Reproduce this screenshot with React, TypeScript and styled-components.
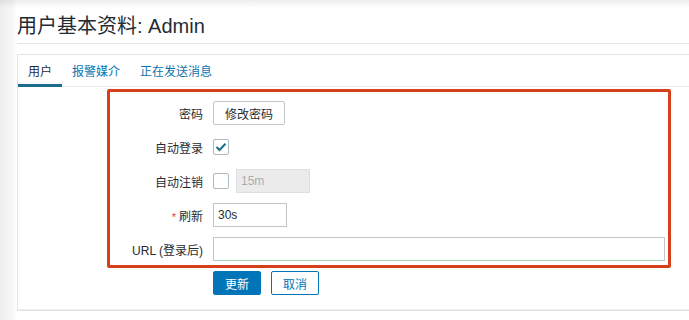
import React from "react";
import styled, { createGlobalStyle } from "styled-components";

const Global = createGlobalStyle`
  html, body { margin: 0; padding: 0; }
  body {
    width: 689px;
    height: 320px;
    overflow: hidden;
    background:
      linear-gradient(to bottom, rgba(0,0,0,0.07), rgba(0,0,0,0) 8px),
      linear-gradient(to right, #efefef 0px, #f6f6f6 12px, #ffffff 17px);
    font-family: "Liberation Sans", Arial, "Noto Sans CJK SC", sans-serif;
    font-size: 12px;
    color: #1f2c33;
  }
`;

const Page = styled.div`
  padding-left: 17px;
  display: flex;
  flex-direction: column;
`;

const Header = styled.div`
  height: 44px;
  display: flex;
  align-items: center;
  border-bottom: 1px solid #e3e6e8;
  padding-top: 6px;
  box-sizing: border-box;
`;

const Title = styled.h1`
  margin: 0;
  font-size: 20px;
  font-weight: normal;
  color: #1f2c33;
  font-family: "Liberation Sans", Arial, "Noto Sans CJK SC", sans-serif;
`;

const TabPanel = styled.div`
  position: relative;
  margin-top: 10px;
  border: 1px solid #dfe4e7;
  border-right: none;
  box-shadow: inset 0 -6px 0 -5px #f0f0f0;
`;

const TabBar = styled.div`
  display: flex;
  height: 31px;
  border-bottom: 1px solid #ebeef0;
`;

const Tab = styled.div<{ $active?: boolean }>`
  padding: 0 10px;
  display: flex;
  align-items: center;
  padding-top: 1px;
  box-sizing: border-box;
  color: ${(p) => (p.$active ? "#1f2c33" : "#0a74b0")};
  border-bottom: 3px solid ${(p) => (p.$active ? "#1b6b90" : "transparent")};
  margin-bottom: -1px;
`;

const Form = styled.div`
  display: flex;
  flex-direction: column;
  gap: 10px;
  padding: 14px 0 15px 0;
`;

const Row = styled.div`
  display: flex;
  align-items: center;
  height: 24px;
  gap: 10px;
`;

const Label = styled.div`
  width: 185px;
  text-align: right;
  color: #1f2c33;
`;

const Star = styled.span`
  color: #e33734;
  margin-right: 3px;
  font-size: 11px;
`;

const Field = styled.div<{ $gap?: number }>`
  display: flex;
  align-items: center;
  gap: ${(p) => p.$gap ?? 7}px;
`;

const Button = styled.button<{ $variant?: "primary" | "outline" | "plain" }>`
  height: 24px;
  padding: 0 11px;
  font-family: inherit;
  font-size: 12px;
  border-radius: 2px;
  box-sizing: border-box;
  cursor: pointer;
  border: 1px solid
    ${(p) => (p.$variant === "plain" ? "#c2c7ca" : "#0275b8")};
  background: ${(p) => (p.$variant === "primary" ? "#0275b8" : "#ffffff")};
  color: ${(p) =>
    p.$variant === "primary" ? "#ffffff" : p.$variant === "outline" ? "#0275b8" : "#1f2c33"};
`;

const Check = styled.div`
  width: 16px;
  height: 16px;
  box-sizing: border-box;
  border: 1px solid #acbbc2;
  border-radius: 2px;
  background: #fff;
  display: flex;
  align-items: center;
  justify-content: center;
`;

const Input = styled.input<{ $w: number }>`
  width: ${(p) => p.$w}px;
  height: 24px;
  box-sizing: border-box;
  border: 1px solid #c0c4c6;
  border-bottom-color: ${(p) => (p.$w > 200 ? "#a9d4b6" : "#c0c4c6")};
  padding: 0 4px;
  font-family: inherit;
  font-size: 12px;
  color: #1f2c33;
  background: #fff;
  outline: none;
  &:disabled {
    background: #ebebeb;
    border-color: #e0e0e0;
    color: #a9adb0;
  }
`;

const Highlight = styled.div`
  position: absolute;
  left: 89px;
  top: 34px;
  width: 564px;
  height: 179px;
  box-sizing: border-box;
  border: 3px solid #d6401d;
  border-radius: 2px;
  pointer-events: none;
`;

export default function App() {
  return (
    <>
      <Global />
      <Page>
        <Header>
          <Title>用户基本资料: Admin</Title>
        </Header>
        <TabPanel>
          <TabBar>
            <Tab $active>用户</Tab>
            <Tab>报警媒介</Tab>
            <Tab>正在发送消息</Tab>
          </TabBar>
          <Form>
            <Row>
              <Label>密码</Label>
              <Button $variant="plain">修改密码</Button>
            </Row>
            <Row>
              <Label>自动登录</Label>
              <Check>
                <svg width="12" height="10" viewBox="0 0 12 10">
                  <path d="M1.5 5 L4.5 8 L10.5 1.8" fill="none" stroke="#1b6b90" strokeWidth="2" />
                </svg>
              </Check>
            </Row>
            <Row>
              <Label>自动注销</Label>
              <Field>
                <Check />
                <Input $w={74} disabled defaultValue="15m" />
              </Field>
            </Row>
            <Row>
              <Label>
                <Star>*</Star>刷新
              </Label>
              <Input $w={74} defaultValue="30s" />
            </Row>
            <Row>
              <Label>URL (登录后)</Label>
              <Input $w={452} defaultValue="" />
            </Row>
            <Row>
              <Label />
              <Field $gap={10}>
                <Button $variant="primary">更新</Button>
                <Button $variant="outline">取消</Button>
              </Field>
            </Row>
          </Form>
          <Highlight />
        </TabPanel>
      </Page>
    </>
  );
}
